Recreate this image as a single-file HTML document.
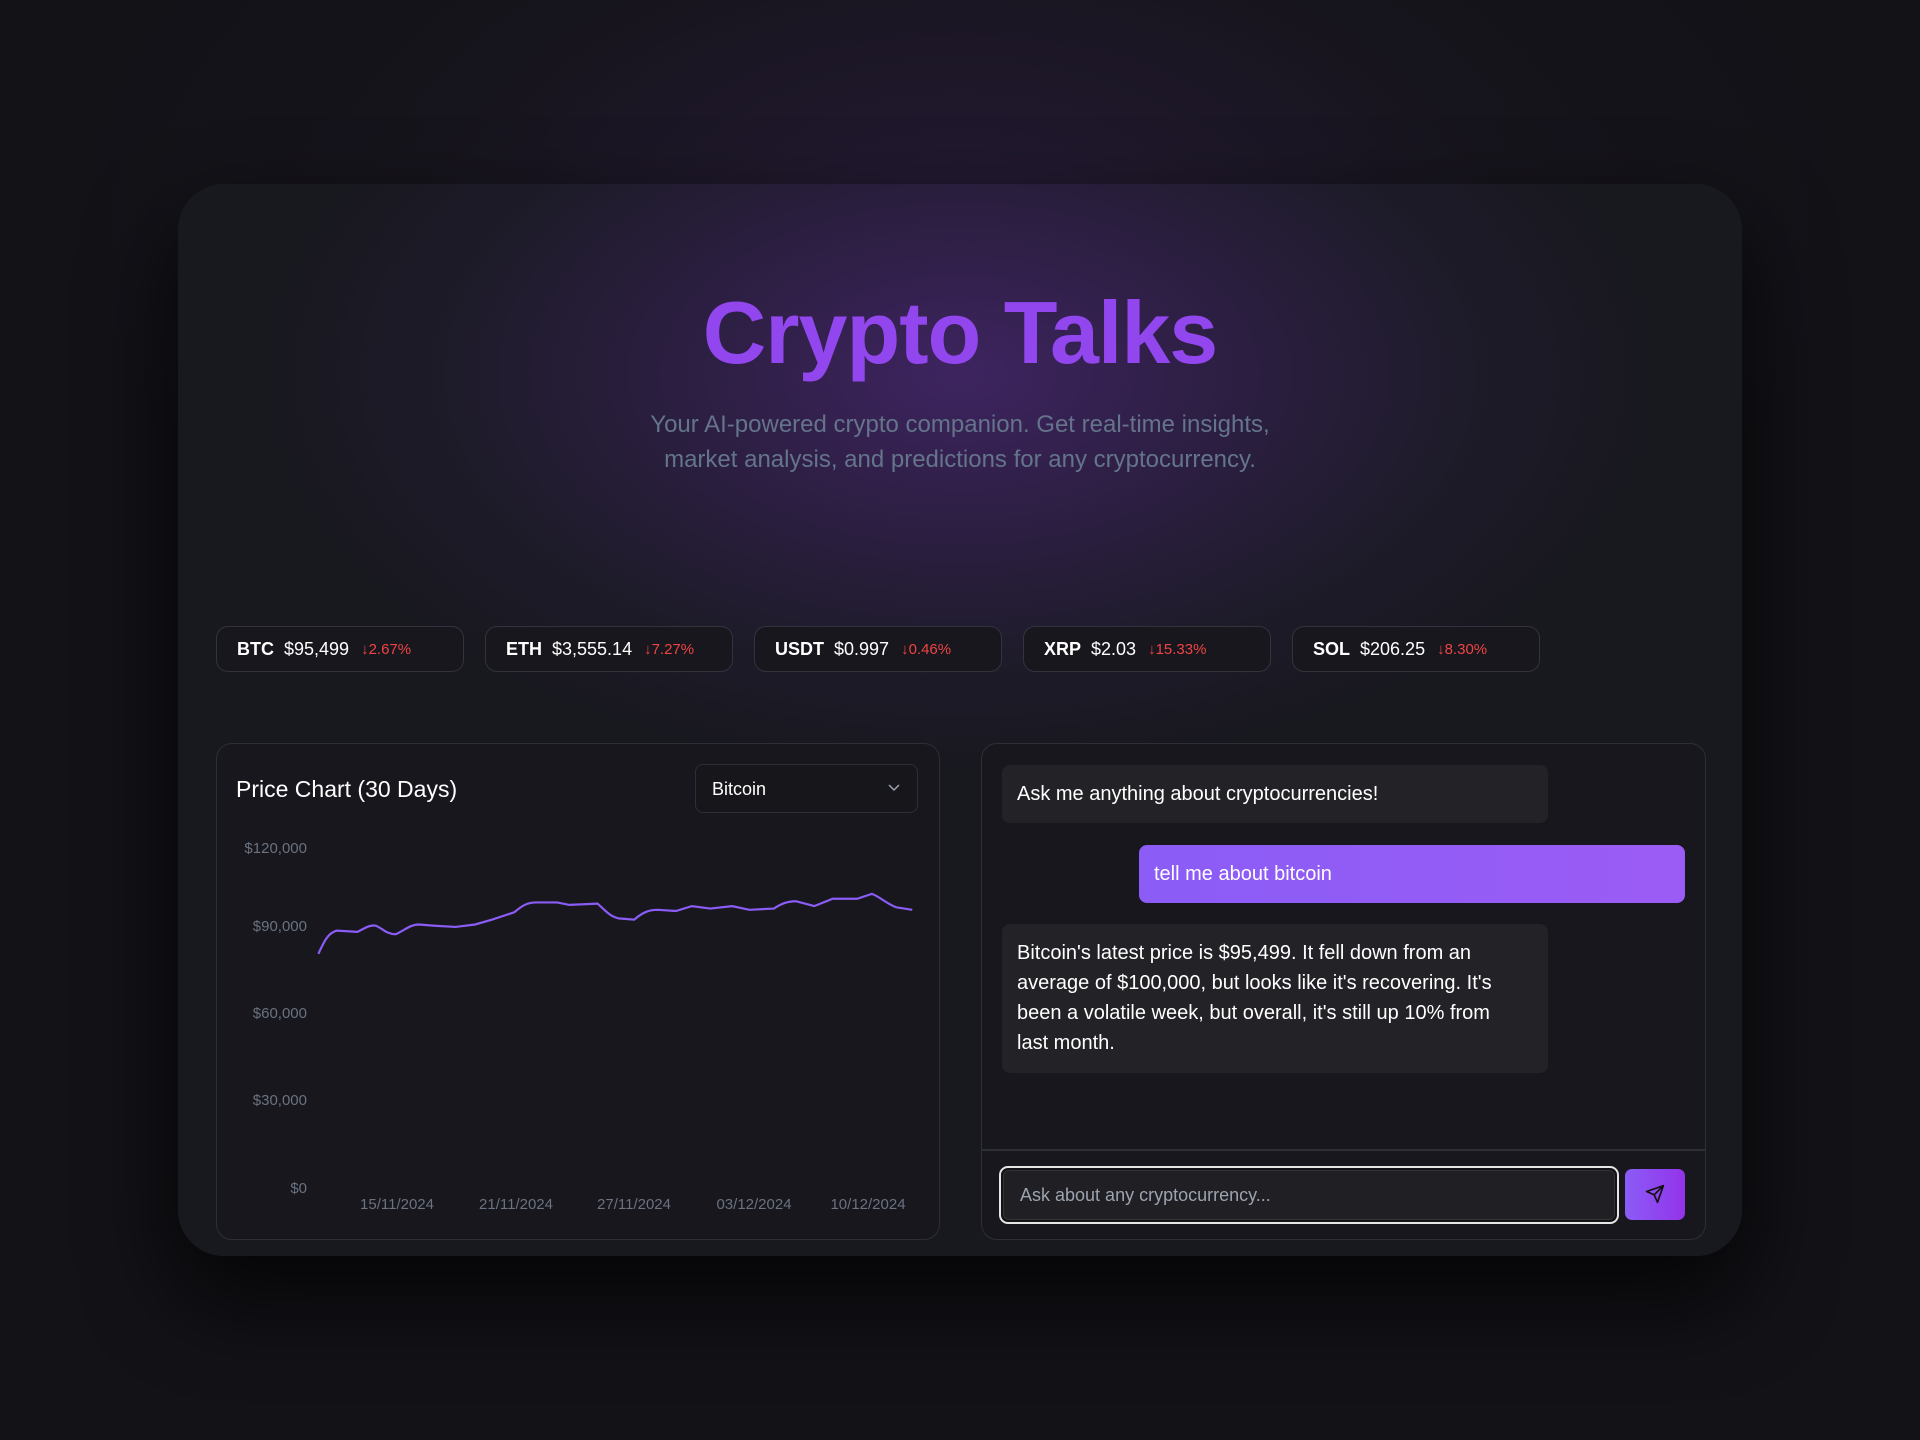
<!DOCTYPE html>
<html><head><meta charset="utf-8"><style>
*{box-sizing:border-box;margin:0;padding:0}
body{width:1920px;height:1440px;overflow:hidden;background:#121217;font-family:"Liberation Sans",sans-serif;position:relative;
background:radial-gradient(ellipse 900px 500px at 960px 220px,#241a34 0%,#16141c 60%,#121217 100%);}
.card{position:absolute;left:178px;top:184px;width:1564px;height:1072px;border-radius:46px;
background:radial-gradient(ellipse 700px 400px at 782px 190px,#3e2460 0%,#2e1f45 35%,#1e1b2a 72%,#18181f 100%);
box-shadow:0 40px 90px rgba(0,0,0,.75);}
.abs{position:absolute}
h1{position:absolute;left:0;width:1920px;top:282px;text-align:center;font-size:88px;font-weight:700;color:#9246ee;letter-spacing:-1px}
.sub{position:absolute;left:0;width:1920px;top:407px;text-align:center;font-size:24px;line-height:35px;color:#64748b}
.tick{position:absolute;top:626px;width:248px;height:46px;border:1.5px solid #33333d;border-radius:12px;background:#17171d;color:#fff;font-size:18px;padding:0 20px;display:flex;align-items:center;white-space:nowrap}
.tick b{font-weight:700;margin-right:10px}
.tick span.p{margin-right:12px}
.tick .d{color:#ef4444;font-size:15px}
.panel{position:absolute;top:743px;height:497px;border:1.5px solid #2e2e36;border-radius:16px;background:#17171d}
.yl{position:absolute;right:0;font-size:15px;color:#6b7280;text-align:right}
.xl{position:absolute;top:1196px;font-size:15px;color:#6b7280;transform:translateX(-50%)}
.bub{position:absolute;border-radius:8px;font-size:20px;color:#fff;padding:0 15px}
</style></head><body>
<div class="card"></div>
<h1>Crypto Talks</h1>
<div class="sub">Your AI-powered crypto companion. Get real-time insights,<br>market analysis, and predictions for any cryptocurrency.</div>

<div class="tick" style="left:216px"><b>BTC</b><span class="p">$95,499</span><span class="d">↓2.67%</span></div>
<div class="tick" style="left:485px"><b>ETH</b><span class="p">$3,555.14</span><span class="d">↓7.27%</span></div>
<div class="tick" style="left:754px"><b>USDT</b><span class="p">$0.997</span><span class="d">↓0.46%</span></div>
<div class="tick" style="left:1023px"><b>XRP</b><span class="p">$2.03</span><span class="d">↓15.33%</span></div>
<div class="tick" style="left:1292px"><b>SOL</b><span class="p">$206.25</span><span class="d">↓8.30%</span></div>

<div class="panel" style="left:216px;width:724px"></div>
<div class="abs" style="left:236px;top:776px;font-size:23px;color:#fff;font-weight:500">Price Chart (30 Days)</div>
<div class="abs" style="left:695px;top:764px;width:223px;height:49px;border:1.5px solid #2e2e36;border-radius:8px;background:#16161b;color:#fff;font-size:18px;padding:14px 16px">Bitcoin
<svg class="abs" style="right:16px;top:18px" width="14" height="10" viewBox="0 0 14 10"><path d="M2 2l5 5 5-5" stroke="#9ca3af" stroke-width="1.5" fill="none"/></svg></div>
<div class="abs" style="left:200px;top:0;width:107px;height:1440px">
<div class="yl" style="top:840px">$120,000</div>
<div class="yl" style="top:918px">$90,000</div>
<div class="yl" style="top:1005px">$60,000</div>
<div class="yl" style="top:1092px">$30,000</div>
<div class="yl" style="top:1180px">$0</div>
</div>
<div class="xl" style="left:397px">15/11/2024</div>
<div class="xl" style="left:516px">21/11/2024</div>
<div class="xl" style="left:634px">27/11/2024</div>
<div class="xl" style="left:754px">03/12/2024</div>
<div class="xl" style="left:868px">10/12/2024</div>

<svg class="abs" style="left:0;top:0" width="1920" height="1440" viewBox="0 0 1568 1176">
<path d="M260 779 C265 768 268 762 275 760 L292 761 C298 758 302 755 307 756 C312 758 316 763 323 763 C330 760 335 755 342 755 L355 756 L372 757 L388 755 L402 751 L420 745 C426 740 430 737 438 737 L455 737 L465 739 L488 738 C493 742 497 748 505 750 L518 751 C525 745 530 743 537 743 L552 744 L565 740 L580 742 L598 740 L612 743 L632 742 C638 738 643 736 650 736 L665 740 L680 734 L700 734 L712 730 C718 732 724 738 732 741 L745 743" stroke="#8b5cf6" stroke-width="1.8" fill="none"/>
</svg>

<div class="panel" style="left:981px;width:725px"></div>
<div class="bub" style="left:1002px;top:765px;width:546px;height:58px;background:#222227;line-height:58px">Ask me anything about cryptocurrencies!</div>
<div class="bub" style="left:1139px;top:845px;width:546px;height:58px;background:linear-gradient(90deg,#8b5cf6,#9b5cf5);line-height:58px">tell me about bitcoin</div>
<div class="bub" style="left:1002px;top:924px;width:546px;height:149px;background:#222227;line-height:30px;padding-top:14px;padding-right:36px">Bitcoin's latest price is $95,499. It fell down from an average of $100,000, but looks like it's recovering. It's been a volatile week, but overall, it's still up 10% from last month.</div>
<div class="abs" style="left:982px;top:1149px;width:723px;height:1.5px;background:#2e2e36"></div>
<div class="abs" style="left:999px;top:1166px;width:620px;height:58px;border:2px solid #e5e5e5;border-radius:9px;padding:2px;background:#121217">
<div style="width:100%;height:100%;border:1px solid #333;border-radius:6px;background:#1f1f24;color:#9ca3af;font-size:18px;padding:0 16px;line-height:48px">Ask about any cryptocurrency...</div></div>
<div class="abs" style="left:1625px;top:1169px;width:60px;height:51px;border-radius:7px;background:linear-gradient(90deg,#8b5cf6,#9333ea)">
<svg class="abs" style="left:20px;top:15px" width="20" height="20" viewBox="0 0 24 24"><path d="M22 2L11 13M22 2l-7 20-4-9-9-4 20-7z" stroke="#111" stroke-width="2" fill="none" stroke-linejoin="round"/></svg></div>
</body></html>
